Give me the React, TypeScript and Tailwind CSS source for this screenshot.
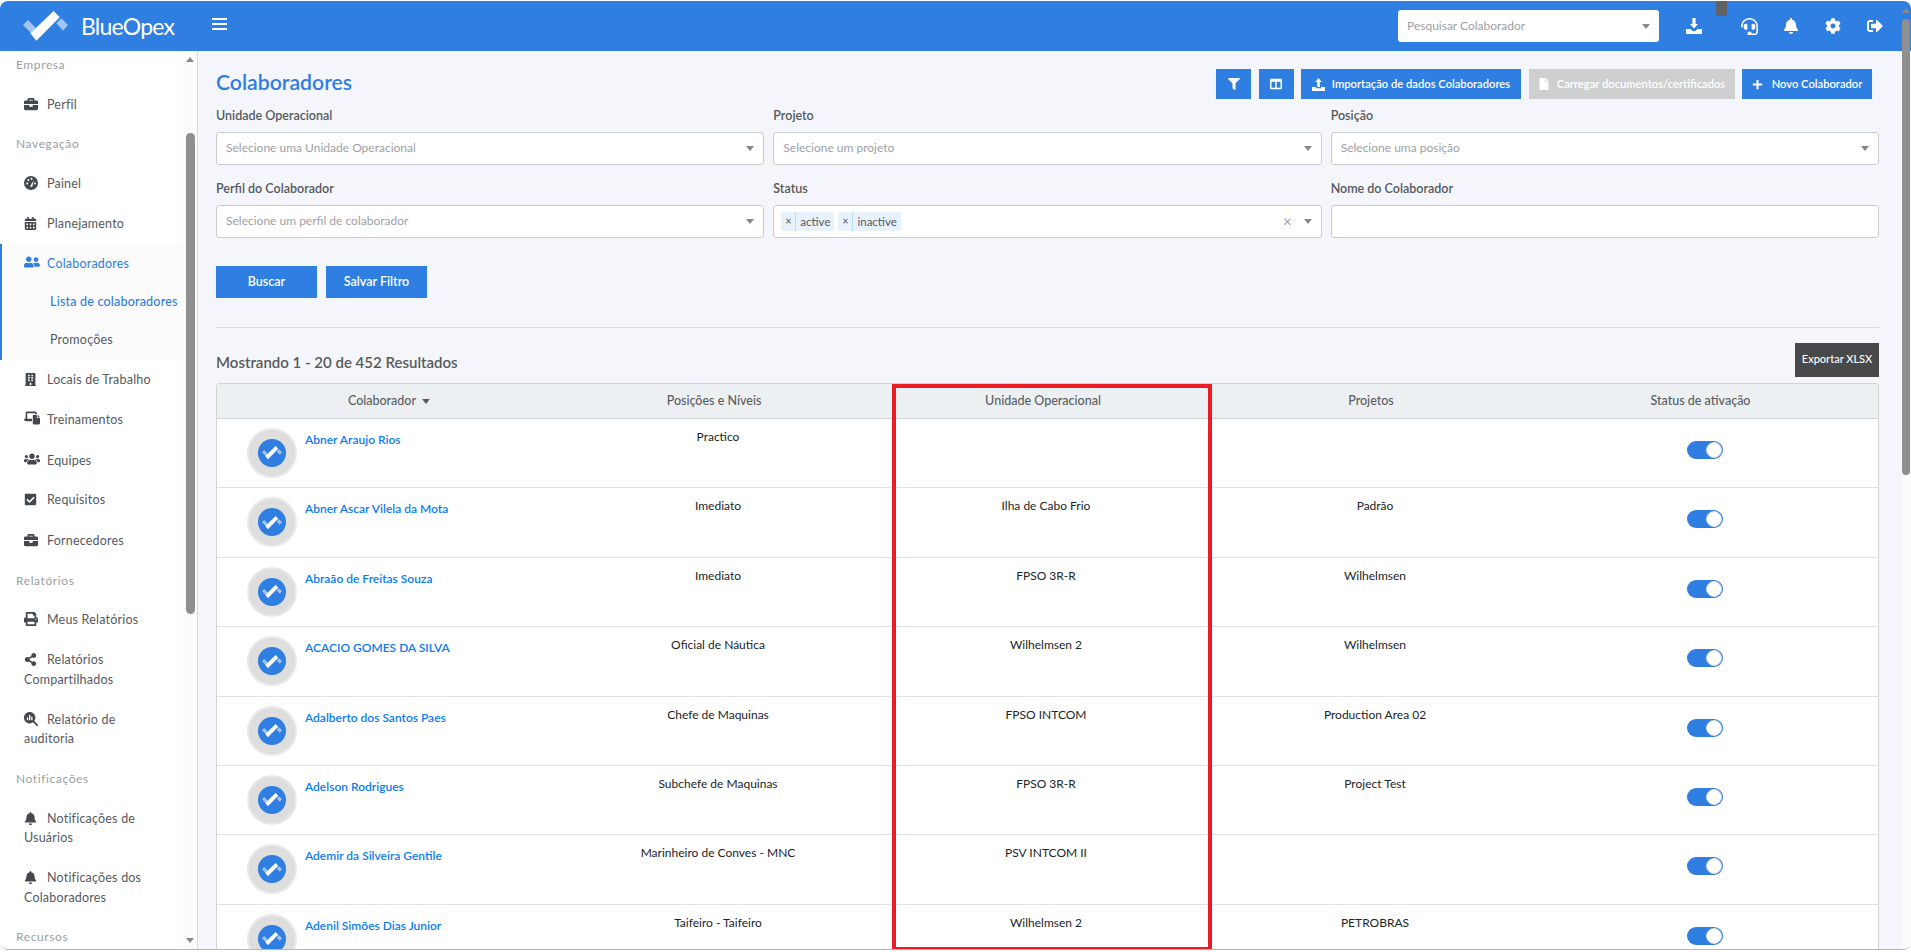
import { ReactNode } from "react";
import {
  FaBell,
  FaBriefcase,
  FaBuilding,
  FaCalendarAlt,
  FaCheckSquare,
  FaCog,
  FaColumns,
  FaFile,
  FaFilter,
  FaHeadset,
  FaPlus,
  FaPrint,
  FaShareAlt,
  FaSignOutAlt,
  FaUserFriends,
  FaUsers,
} from "react-icons/fa";
import { FaLaptopFile, FaMagnifyingGlassChart } from "react-icons/fa6";

const ROWS = [
  { name: "Abner Araujo Rios", pos: "Practico", unit: "", proj: "" },
  { name: "Abner Ascar Vilela da Mota", pos: "Imediato", unit: "Ilha de Cabo Frio", proj: "Padrão" },
  { name: "Abraão de Freitas Souza", pos: "Imediato", unit: "FPSO 3R-R", proj: "Wilhelmsen" },
  { name: "ACACIO GOMES DA SILVA", pos: "Oficial de Náutica", unit: "Wilhelmsen 2", proj: "Wilhelmsen" },
  { name: "Adalberto dos Santos Paes", pos: "Chefe de Maquinas", unit: "FPSO INTCOM", proj: "Production Area 02" },
  { name: "Adelson Rodrigues", pos: "Subchefe de Maquinas", unit: "FPSO 3R-R", proj: "Project Test" },
  { name: "Ademir da Silveira Gentile", pos: "Marinheiro de Conves - MNC", unit: "PSV INTCOM II", proj: "" },
  { name: "Adenil Simões Dias Junior", pos: "Taifeiro - Taifeiro", unit: "Wilhelmsen 2", proj: "PETROBRAS" },
];

function LogoMark({ className }: { className: string }) {
  return (
    <svg viewBox="0 0 135 90" className={className}>
      <path d="M0 42 L15 27 L38 50 L25 67 Z" fill="#fff" opacity="0.55" />
      <path d="M115 22 L135 42 L120 59 L100 37 Z" fill="#fff" opacity="0.55" />
      <path d="M22 67 L92 0 L110 19 L40 89 Z" fill="#fff" />
    </svg>
  );
}

function DownloadTray({ className }: { className: string }) {
  return (
    <svg viewBox="0 0 16 16" className={className} fill="currentColor">
      <path d="M6.4 0h3.2v6H12L8 10.4 4 6h2.4z" />
      <path d="M0 11h4.6L6 12.6c1 1 3 1 4 0l1.4-1.6H16v5H0z" />
    </svg>
  );
}

function UploadTray({ className }: { className: string }) {
  return (
    <svg viewBox="0 0 16 16" className={className} fill="currentColor">
      <path d="M6.4 11V5H4l4-5 4 5H9.600v6z" />
      <path d="M0 11h5v1.600h6V11h5v5H0z" />
    </svg>
  );
}

function Gauge() {
  return (
    <svg viewBox="0 0 14 14" className="h-[14px] w-[14px]">
      <circle cx="7" cy="7" r="7" fill="currentColor" />
      <circle cx="3.200" cy="7.500" r="1" fill="#fff" />
      <circle cx="4.300" cy="4" r="1" fill="#fff" />
      <circle cx="7.500" cy="2.800" r="1" fill="#fff" />
      <path d="M6 10.500 L9.800 4.200 L8.200 11 Z" fill="#fff" />
      <circle cx="11" cy="7.500" r="1" fill="#fff" />
    </svg>
  );
}

function NavItem({
  icon,
  children,
  active,
  second,
}: {
  icon: ReactNode;
  children: ReactNode;
  active?: boolean;
  second?: string;
}) {
  return (
    <div className={`py-[10px] pl-[24px] pr-1 text-[12.5px] leading-[19.7px] tracking-[0.2px] ${active ? "text-[#2f7ee2]" : "text-[#555a60]"}`}>
      <span className="inline-flex w-[23px] align-[-2px] text-[#44484d]">{icon}</span>
      {children}
      {second && <div>{second}</div>}
    </div>
  );
}

function Section({ children }: { children: ReactNode }) {
  return <div className="py-[10px] pl-[16px] text-[12px] leading-[19.7px] tracking-[0.6px] text-[#9a9ea3]">{children}</div>;
}

function Select({ label, placeholder }: { label: string; placeholder: string }) {
  return (
    <div>
      <div className="text-[12.5px] leading-[18px] font-semibold text-[#55595e]">{label}</div>
      <div className="mt-[7px] flex h-[33px] items-center justify-between rounded-[3px] border border-[#c9ccd1] bg-white pl-[9px] pr-[9px]">
        <span className="mb-[2px] text-[12px] text-[#9ea1a5]">{placeholder}</span>
        <Caret />
      </div>
    </div>
  );
}

function Caret() {
  return <span className="h-0 w-0 border-x-[4.5px] border-t-[5px] border-x-transparent border-t-[#85888c]" />;
}

function Tag({ children }: { children: string }) {
  return (
    <span className="flex h-[19px] items-center rounded-[2px] bg-[#e8f2fd] text-[11.5px] text-[#55595e]">
      <span className="flex h-full w-[15px] items-center justify-center border-r border-[#bcd9f5] text-[11px]">×</span>
      <span className="px-[4px]">{children}</span>
    </span>
  );
}

function HeaderButton({ children, className }: { children: ReactNode; className: string }) {
  return (
    <div className={`flex h-[30px] items-center justify-center whitespace-nowrap text-[11.2px] font-semibold text-white ${className}`}>
      {children}
    </div>
  );
}

function Avatar() {
  return (
    <div className="flex h-[50px] w-[50px] shrink-0 items-center justify-center rounded-full border-[2px] border-[#e9e9e9] bg-[#dedede]">
      <div className="flex h-[28px] w-[28px] items-center justify-center rounded-full bg-[#2f7ee2]">
        <LogoMark className="w-[20px]" />
      </div>
    </div>
  );
}

function Row({ row }: { row: (typeof ROWS)[number] }) {
  return (
    <div className="grid h-[69.4px] shrink-0 grid-cols-[344px_306px_352px_304px_1fr] border-b border-[#dee0e3] bg-white text-center text-[12px] leading-[16px] text-[#212529]">
      <div className="flex pl-[30px] pt-[9px] text-left">
        <Avatar />
        <span className="ml-[8px] pt-[4px] font-semibold text-[#0b7bf5]">{row.name}</span>
      </div>
      <div className="pl-[8px] pt-[10px]">{row.pos}</div>
      <div className="pl-[6px] pt-[10px]">{row.unit}</div>
      <div className="pl-[8px] pt-[10px]">{row.proj}</div>
      <div className="flex justify-center pl-[8px] pt-[22px]">
        <div className="flex h-[18px] w-[36px] items-center justify-end rounded-full bg-[#2f7ee2] pr-[1px]">
          <div className="h-[16px] w-[16px] rounded-full border border-[#d6dbe4] bg-white" />
        </div>
      </div>
    </div>
  );
}

export default function App() {
  return (
    <div className="h-[952px] bg-white pt-[1px]">
      <div className="relative flex h-[949px] flex-col overflow-hidden rounded-[8px] border-b border-[#b5b5b5] bg-[#f4f6fb] font-['Lato',sans-serif]">
        {/* top bar */}
        <header className="flex h-[50px] shrink-0 items-center bg-[#2f7ee2] pr-[10px] text-white">
          <LogoMark className="ml-[23px] w-[45px]" />
          <span className="ml-[13px] text-[23px] leading-none tracking-[-0.8px]">BlueOpex</span>
          <div className="ml-[38px] mb-[4px] flex w-[15px] flex-col gap-[3px]">
            <span className="h-[2px] bg-white" />
            <span className="h-[2px] bg-white" />
            <span className="h-[2px] bg-white" />
          </div>
          <div className="ml-auto flex items-center">
            <div className="flex h-[32px] w-[261px] items-center justify-between rounded-[3px] bg-white px-[9px] text-[12px] text-[#9ea1a5]">
              Pesquisar Colaborador
              <Caret />
            </div>
            <DownloadTray className="ml-[27px] h-[16px] w-[16px]" />
            <FaHeadset className="ml-[39px] h-[17px] w-[17px]" />
            <FaBell className="ml-[25px] h-[16px] w-[16px]" />
            <FaCog className="ml-[26px] h-[16px] w-[16px]" />
            <FaSignOutAlt className="ml-[26px] mr-[18px] h-[16px] w-[16px]" />
          </div>
        </header>

        <div className="flex min-h-0 flex-1">
          {/* sidebar */}
          <aside className="flex w-[198px] shrink-0 overflow-hidden border-r border-[#d9dbde] bg-white">
            <nav className="-mt-[6px] flex w-[183px] shrink-0 flex-col">
              <Section>Empresa</Section>
              <NavItem icon={<FaBriefcase size={14} />}>Perfil</NavItem>
              <Section>Navegação</Section>
              <NavItem icon={<Gauge />}>Painel</NavItem>
              <NavItem icon={<FaCalendarAlt size={13} />}>Planejamento</NavItem>
              <div className="border-l-2 border-[#2f7ee2] bg-[#fbfbfb] pb-px">
                <div className="-ml-[2px]">
                  <NavItem active icon={<FaUserFriends size={16} className="text-[#2f7ee2]" />}>Colaboradores</NavItem>
                </div>
                <div className="whitespace-nowrap py-[9px] pl-[48px] text-[12.5px] leading-[20px] font-medium tracking-[0.2px] text-[#2f7ee2]">Lista de colaboradores</div>
                <div className="py-[9px] pl-[48px] text-[12.5px] leading-[20px] tracking-[0.2px] text-[#555a60]">Promoções</div>
              </div>
              <NavItem icon={<FaBuilding size={13} />}>Locais de Trabalho</NavItem>
              <NavItem icon={<FaLaptopFile size={16} />}>Treinamentos</NavItem>
              <div className="mt-px"><NavItem icon={<FaUsers size={16} />}>Equipes</NavItem></div>
              <NavItem icon={<FaCheckSquare size={13} />}>Requisitos</NavItem>
              <div className="mt-px"><NavItem icon={<FaBriefcase size={14} />}>Fornecedores</NavItem></div>
              <Section>Relatórios</Section>
              <NavItem icon={<FaPrint size={14} />}>Meus Relatórios</NavItem>
              <NavItem icon={<FaShareAlt size={13} />} second="Compartilhados">Relatórios</NavItem>
              <NavItem icon={<FaMagnifyingGlassChart size={14} />} second="auditoria">Relatório de</NavItem>
              <Section>Notificações</Section>
              <NavItem icon={<FaBell size={13} />} second="Usuários">Notificações de</NavItem>
              <NavItem icon={<FaBell size={13} />} second="Colaboradores">Notificações dos</NavItem>
              <Section>Recursos</Section>
            </nav>
            {/* sidebar scrollbar */}
            <div className="relative w-[14px] bg-[#fbfbfb]">
              <span className="absolute left-[3px] top-[6px] h-0 w-0 border-x-[4px] border-b-[5px] border-x-transparent border-b-[#8a8a8a]" />
              <span className="absolute left-[3px] top-[82px] h-[481px] w-[9px] rounded-full bg-[#8f8f8f]" />
              <span className="absolute bottom-[6px] left-[3px] h-0 w-0 border-x-[4px] border-t-[5px] border-x-transparent border-t-[#8a8a8a]" />
            </div>
          </aside>

          {/* main */}
          <main className="flex min-w-0 flex-1 flex-col overflow-hidden pl-[18px] pr-[22px]">
            <div className="mt-[18px] flex h-[30px] shrink-0 items-center justify-between">
              <h1 className="mb-[3px] text-[21.2px] leading-none font-semibold text-[#2f7ee2]">Colaboradores</h1>
              <div className="mr-[7px] flex gap-[7.5px]">
                <HeaderButton className="w-[35px] bg-[#2f7ee2]"><FaFilter size={12} /></HeaderButton>
                <HeaderButton className="w-[35px] bg-[#2f7ee2]"><FaColumns size={12} /></HeaderButton>
                <HeaderButton className="w-[220px] gap-[7px] bg-[#2f7ee2]"><UploadTray className="h-[13px] w-[13px]" />Importação de dados Colaboradores</HeaderButton>
                <HeaderButton className="w-[206px] gap-[7px] bg-[#cfcfcf]"><FaFile size={12} />Carregar documentos/certificados</HeaderButton>
                <HeaderButton className="w-[130px] gap-[9px] bg-[#2f7ee2]"><FaPlus size={11} />Novo Colaborador</HeaderButton>
              </div>
            </div>

            <div className="mt-[8px] grid shrink-0 grid-cols-3 gap-x-[9px] gap-y-[15px]">
              <Select label="Unidade Operacional" placeholder="Selecione uma Unidade Operacional" />
              <Select label="Projeto" placeholder="Selecione um projeto" />
              <Select label="Posição" placeholder="Selecione uma posição" />
              <Select label="Perfil do Colaborador" placeholder="Selecione um perfil de colaborador" />
              <div>
                <div className="text-[12.5px] leading-[18px] font-semibold text-[#55595e]">Status</div>
                <div className="mt-[7px] flex h-[33px] items-center gap-[4px] rounded-[3px] border border-[#c9ccd1] bg-white pl-[7px] pr-[9px]">
                  <Tag>active</Tag>
                  <Tag>inactive</Tag>
                  <span className="ml-auto mr-[8px] text-[15px] leading-none text-[#9ea1a5]">×</span>
                  <Caret />
                </div>
              </div>
              <div>
                <div className="text-[12.5px] leading-[18px] font-semibold text-[#55595e]">Nome do Colaborador</div>
                <div className="mt-[7px] h-[33px] rounded-[3px] border border-[#c9ccd1] bg-white" />
              </div>
            </div>

            <div className="mt-[28px] flex shrink-0 gap-[9px]">
              <div className="flex h-[32px] w-[101px] items-center justify-center bg-[#2f7ee2] text-[12.5px] font-semibold text-white">Buscar</div>
              <div className="flex h-[32px] w-[101px] items-center justify-center bg-[#2f7ee2] text-[12.5px] font-semibold text-white">Salvar Filtro</div>
            </div>
            <hr className="mt-[29px] shrink-0 border-[#d9dbde]" />

            <div className="mt-[14px] flex h-[35px] shrink-0 items-center justify-between">
              <span className="mt-[5px] text-[15px] font-semibold text-[#5a5a5a]">Mostrando 1 - 20 de 452 Resultados</span>
              <div className="flex h-[34px] w-[84px] items-center justify-center bg-[#48494b] text-[11px] font-medium text-white">Exportar XLSX</div>
            </div>

            <div className="mt-[6px] flex flex-col rounded-t-[4px] border-x border-t border-[#d0d3d6]">
              <div className="grid h-[35px] shrink-0 grid-cols-[344px_306px_352px_304px_1fr] items-center border-b border-[#d0d3d6] bg-[#edf0f2] text-center text-[12.5px] font-medium text-[#5a5e63]">
                <div className="flex items-center justify-center gap-[6px]">
                  Colaborador
                  <span className="h-0 w-0 border-x-[4px] border-t-[5px] border-x-transparent border-t-[#5a5e63]" />
                </div>
                <div>Posições e Níveis</div>
                <div>Unidade Operacional</div>
                <div>Projetos</div>
                <div>Status de ativação</div>
              </div>
              {ROWS.map((row) => (
                <Row key={row.name} row={row} />
              ))}
            </div>
          </main>

          {/* page scrollbar */}
          <div className="relative w-[10px] shrink-0 bg-[#fbfbfb]">
            <span className="absolute left-[1px] top-[-43px] h-0 w-0 border-x-[4px] border-b-[5px] border-x-transparent border-b-[#8a8a8a]" />
            <span className="absolute left-[1px] top-[-32px] h-[456px] w-[8px] rounded-full bg-[#8f8f8f]" />
          </div>
        </div>

        {/* red highlight over the Unidade Operacional column */}
        <div className="absolute left-[892px] top-[383px] h-[567px] w-[320px] border-4 border-[#ec1c24]" />
        {/* small grey tab from the header */}
        <div className="absolute left-[1716px] top-0 h-[15px] w-[11px] rounded-b-[2px] bg-[#5f6368]" />
      </div>
    </div>
  );
}
